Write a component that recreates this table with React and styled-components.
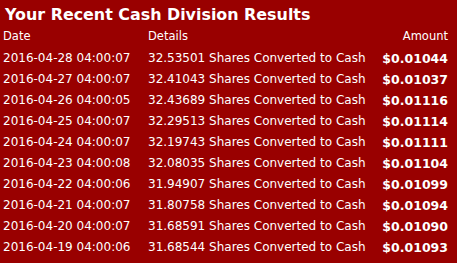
import React from "react";
import styled, { createGlobalStyle } from "styled-components";

const Global = createGlobalStyle`
  html, body {
    margin: 0;
    padding: 0;
    background: #990000;
  }
  body {
    font-family: "DejaVu Sans", Verdana, sans-serif;
    color: #ffffff;
  }
`;

const Panel = styled.div`
  width: 457px;
  height: 263px;
  background: #990000;
  overflow: hidden;
`;

const Title = styled.h2`
  margin: 0;
  padding: 5px 0 0 5px;
  font-size: 15.9px;
  line-height: 20px;
  font-weight: bold;
  color: #ffffff;
`;

const Table = styled.div`
  display: grid;
  grid-template-columns: 145px 1fr auto;
  padding: 0 9px 0 3px;
`;

const HeadCell = styled.div`
  font-size: 11.5px;
  line-height: 23px;
  text-align: ${(p) => (p.$right ? "right" : "left")};
`;

const Cell = styled.div`
  font-size: ${(p) => (p.$bold ? "12.5px" : "12px")};
  font-weight: ${(p) => (p.$bold ? "bold" : "normal")};
  line-height: 21px;
  white-space: nowrap;
  text-align: ${(p) => (p.$right ? "right" : "left")};
`;

const rows = [
  ["2016-04-28 04:00:07", "32.53501", "$0.01044"],
  ["2016-04-27 04:00:07", "32.41043", "$0.01037"],
  ["2016-04-26 04:00:05", "32.43689", "$0.01116"],
  ["2016-04-25 04:00:07", "32.29513", "$0.01114"],
  ["2016-04-24 04:00:07", "32.19743", "$0.01111"],
  ["2016-04-23 04:00:08", "32.08035", "$0.01104"],
  ["2016-04-22 04:00:06", "31.94907", "$0.01099"],
  ["2016-04-21 04:00:07", "31.80758", "$0.01094"],
  ["2016-04-20 04:00:07", "31.68591", "$0.01090"],
  ["2016-04-19 04:00:06", "31.68544", "$0.01093"],
];

export default function App() {
  return (
    <Panel>
      <Global />
      <Title>Your Recent Cash Division Results</Title>
      <Table>
        <HeadCell>Date</HeadCell>
        <HeadCell>Details</HeadCell>
        <HeadCell $right>Amount</HeadCell>
        {rows.map(([date, shares, amount]) => (
          <React.Fragment key={date}>
            <Cell>{date}</Cell>
            <Cell>{shares} Shares Converted to Cash</Cell>
            <Cell $bold $right>{amount}</Cell>
          </React.Fragment>
        ))}
      </Table>
    </Panel>
  );
}
